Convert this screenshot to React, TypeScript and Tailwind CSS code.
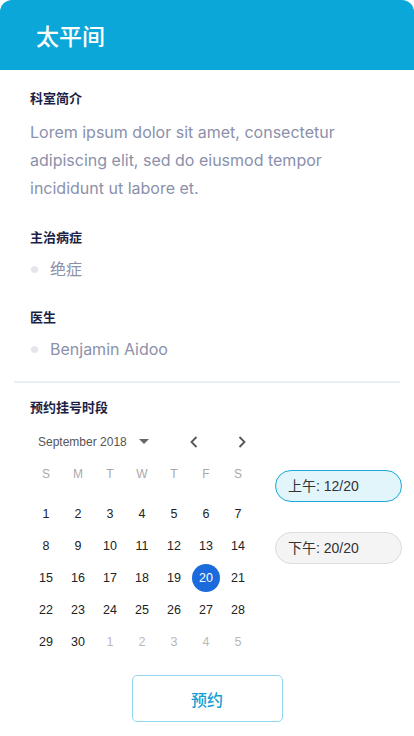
const cjk = "font-['Noto_Sans_CJK_SC',sans-serif]";
const latin = "font-['Liberation_Sans','Noto_Sans_CJK_SC',sans-serif]";
const body = "font-['Inter','Noto_Sans_CJK_SC',sans-serif]";

const weekdays = ["S", "M", "T", "W", "T", "F", "S"];

type Day = { n: number; muted?: boolean };

const weeks: Day[][] = [
	[1, 2, 3, 4, 5, 6, 7].map(n => ({ n })),
	[8, 9, 10, 11, 12, 13, 14].map(n => ({ n })),
	[15, 16, 17, 18, 19, 20, 21].map(n => ({ n })),
	[22, 23, 24, 25, 26, 27, 28].map(n => ({ n })),
	[
		{ n: 29 },
		{ n: 30 },
		{ n: 1, muted: true },
		{ n: 2, muted: true },
		{ n: 3, muted: true },
		{ n: 4, muted: true },
		{ n: 5, muted: true },
	],
];

function Label({ children }: { children: React.ReactNode }) {
	return <div className={`${cjk} text-[13px] leading-[18px] font-bold text-[#1c1f45]`}>{children}</div>;
}

function Bullet({ children }: { children: React.ReactNode }) {
	return (
		<div className="flex items-center h-[28px]">
			<div className="w-[7px] h-[7px] rounded-full bg-[#e4e6ec] ml-[1px] mr-[12px]"></div>
			<span className={`${body} text-[16px] text-[#8b90ab]`}>{children}</span>
		</div>
	);
}

function Calendar() {
	return (
		<div className={`${latin} w-[224px] shrink-0`}>
			{/* month header */}
			<div className="flex items-center h-[32px]">
				<span className="ml-[8px] text-[12px] text-[#555] whitespace-nowrap">September 2018</span>
				<svg className="ml-[12px] shrink-0" width="10" height="6" viewBox="0 0 10 6">
					<path d="M0 0 L10 0 L5 5 Z" fill="#666" />
				</svg>
				<svg className="ml-[41px] shrink-0" width="8" height="12" viewBox="0 0 8 12">
					<path d="M6.5 1 L1.5 6 L6.5 11" stroke="#555" strokeWidth="1.8" fill="none" />
				</svg>
				<svg className="ml-[40px] shrink-0" width="8" height="12" viewBox="0 0 8 12">
					<path d="M1.5 1 L6.5 6 L1.5 11" stroke="#555" strokeWidth="1.8" fill="none" />
				</svg>
			</div>
			{/* weekdays */}
			<div className="grid grid-cols-7 h-[32px] items-center">
				{weekdays.map((d, i) => (
					<div key={i} className="text-center text-[12px] text-[#a9a9a9]">
						{d}
					</div>
				))}
			</div>
			<div className="mt-[8px]">
				{weeks.map((w, wi) => (
					<div key={wi} className="grid grid-cols-7 h-[32px] items-center">
						{w.map((d, di) => (
							<div key={di} className="flex justify-center">
								{d.n === 20 && !d.muted ? (
									<div className="w-[28px] h-[28px] rounded-full bg-[#1b6bdc] text-white text-[12.5px] flex items-center justify-center">
										{d.n}
									</div>
								) : (
									<span className={`text-[12.5px] ${d.muted ? "text-[#b9b9b9]" : "text-[#222]"}`}>{d.n}</span>
								)}
							</div>
						))}
					</div>
				))}
			</div>
		</div>
	);
}

export default function App() {
	return (
		<div className="w-[414px] h-[736px] bg-white overflow-hidden">
			{/* Header */}
			<div className="h-[70px] bg-[#0ba7d8] rounded-t-[12px] flex items-center pl-[36px]">
				<span className={`${cjk} text-[23px] text-white font-medium`}>太平间</span>
			</div>

			<div className="px-[30px] pt-[19px]">
				<Label>科室简介</Label>
				<p className={`${body} mt-[11px] text-[16px] leading-[28px] text-[#8b90ab] w-[340px]`}>
					Lorem ipsum dolor sit amet, consectetur adipiscing elit, sed do eiusmod tempor incididunt ut labore et.
				</p>

				<div className="mt-[26px]">
					<Label>主治病症</Label>
				</div>
				<div className="mt-[9px]">
					<Bullet>绝症</Bullet>
				</div>

				<div className="mt-[25px]">
					<Label>医生</Label>
				</div>
				<div className="mt-[9px]">
					<Bullet>Benjamin Aidoo</Bullet>
				</div>
			</div>

			{/* Divider */}
			<div className="mx-[14px] mt-[18px] h-[2px] bg-[#e8eef2]"></div>

			<div className="px-[30px] pt-[15px]">
				<Label>预约挂号时段</Label>
				<div className="flex mt-[10px]">
					<Calendar />
					<div className={`${latin} ml-[21px] mt-[44px] flex flex-col gap-[30px]`}>
						<div className="w-[127px] h-[32px] rounded-full border border-[#1aa8d8] bg-[#e2f5fb] flex items-center pl-[12px] text-[14px] text-[#333]">
							上午: 12/20
						</div>
						<div className="w-[127px] h-[32px] rounded-full border border-[#dcdcdc] bg-[#f4f4f4] flex items-center pl-[12px] text-[14px] text-[#333]">
							下午: 20/20
						</div>
					</div>
				</div>
				<div className="flex justify-center mt-[17px]">
					<button
						className={`${cjk} w-[151px] h-[47px] rounded-[5px] border border-[#92d7ef] bg-white text-[16px] text-[#169fd6] font-medium`}>
						预约
					</button>
				</div>
			</div>
		</div>
	);
}
